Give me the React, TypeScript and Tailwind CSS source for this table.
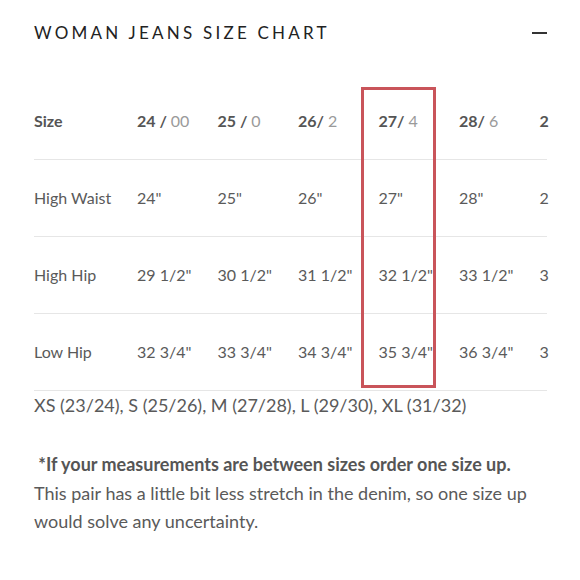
type Row = { label: string; values: string[] }

const sizes = [
  { us: "24 /", alt: "00" },
  { us: "25 /", alt: "0" },
  { us: "26/", alt: "2" },
  { us: "27/", alt: "4" },
  { us: "28/", alt: "6" },
  { us: "2", alt: "" },
]

// last column runs off the edge of the card, only its first digit shows
const rows: Row[] = [
  { label: "High Waist", values: ['24"', '25"', '26"', '27"', '28"', "2"] },
  { label: "High Hip", values: ['29 1/2"', '30 1/2"', '31 1/2"', '32 1/2"', '33 1/2"', "3"] },
  { label: "Low Hip", values: ['32 3/4"', '33 3/4"', '34 3/4"', '35 3/4"', '36 3/4"', "3"] },
]

const gridCols = "grid grid-cols-[103px_80.5px_80.5px_80.5px_80.5px_80.5px_8px]"

export default function App() {
  return (
    <main className="h-[580px] w-[580px] overflow-hidden bg-white pl-[34px] pr-[33px] pt-[20px] font-['Lato',sans-serif] text-[#5a5a5a]">
      <header className="flex h-[26px] items-center justify-between">
        <h1 className="text-[17px] font-normal tracking-[0.19em] text-[#222]">WOMAN JEANS SIZE CHART</h1>
        <span className="h-[1.6px] w-[15px] bg-[#333]" />
      </header>

      <div className="relative mt-[37px]">
        <div className={cn(gridCols, "h-[76px] items-center text-[16px] font-bold")}>
          <span className="text-[#555]">Size</span>
          {sizes.map((s) => (
            <span key={s.us} className="whitespace-nowrap text-[#555]">
              {s.us} {s.alt ? <span className="font-normal text-[#9a9a9a]">{s.alt}</span> : null}
            </span>
          ))}
        </div>

        {rows.map((row) => (
          <div key={row.label} className={cn(gridCols, "h-[77px] items-center border-t border-[#e6e6e6] text-[16px]")}>
            <span className="whitespace-nowrap">{row.label}</span>
            {row.values.map((v, i) => (
              <span key={i} className="whitespace-nowrap">
                {v}
              </span>
            ))}
          </div>
        ))}
        <div className="border-t border-[#e6e6e6]" />

        <div className="pointer-events-none absolute left-[327px] top-[4px] h-[301px] w-[75px] border-[3px] border-[#c9545a]" />
      </div>

      <p className="text-[18px] leading-[28px]">XS (23/24), S (25/26), M (27/28), L (29/30), XL (31/32)</p>

      <div className="mt-[31px] text-[18px] leading-[28.5px]">
        <p className="font-bold text-[#555]">&nbsp;*If your measurements are between sizes order one size up.</p>
        <p>This pair has a little bit less stretch in the denim, so one size up would solve any uncertainty.</p>
      </div>
    </main>
  )
}

function cn(...parts: string[]) {
  return parts.join(" ")
}
